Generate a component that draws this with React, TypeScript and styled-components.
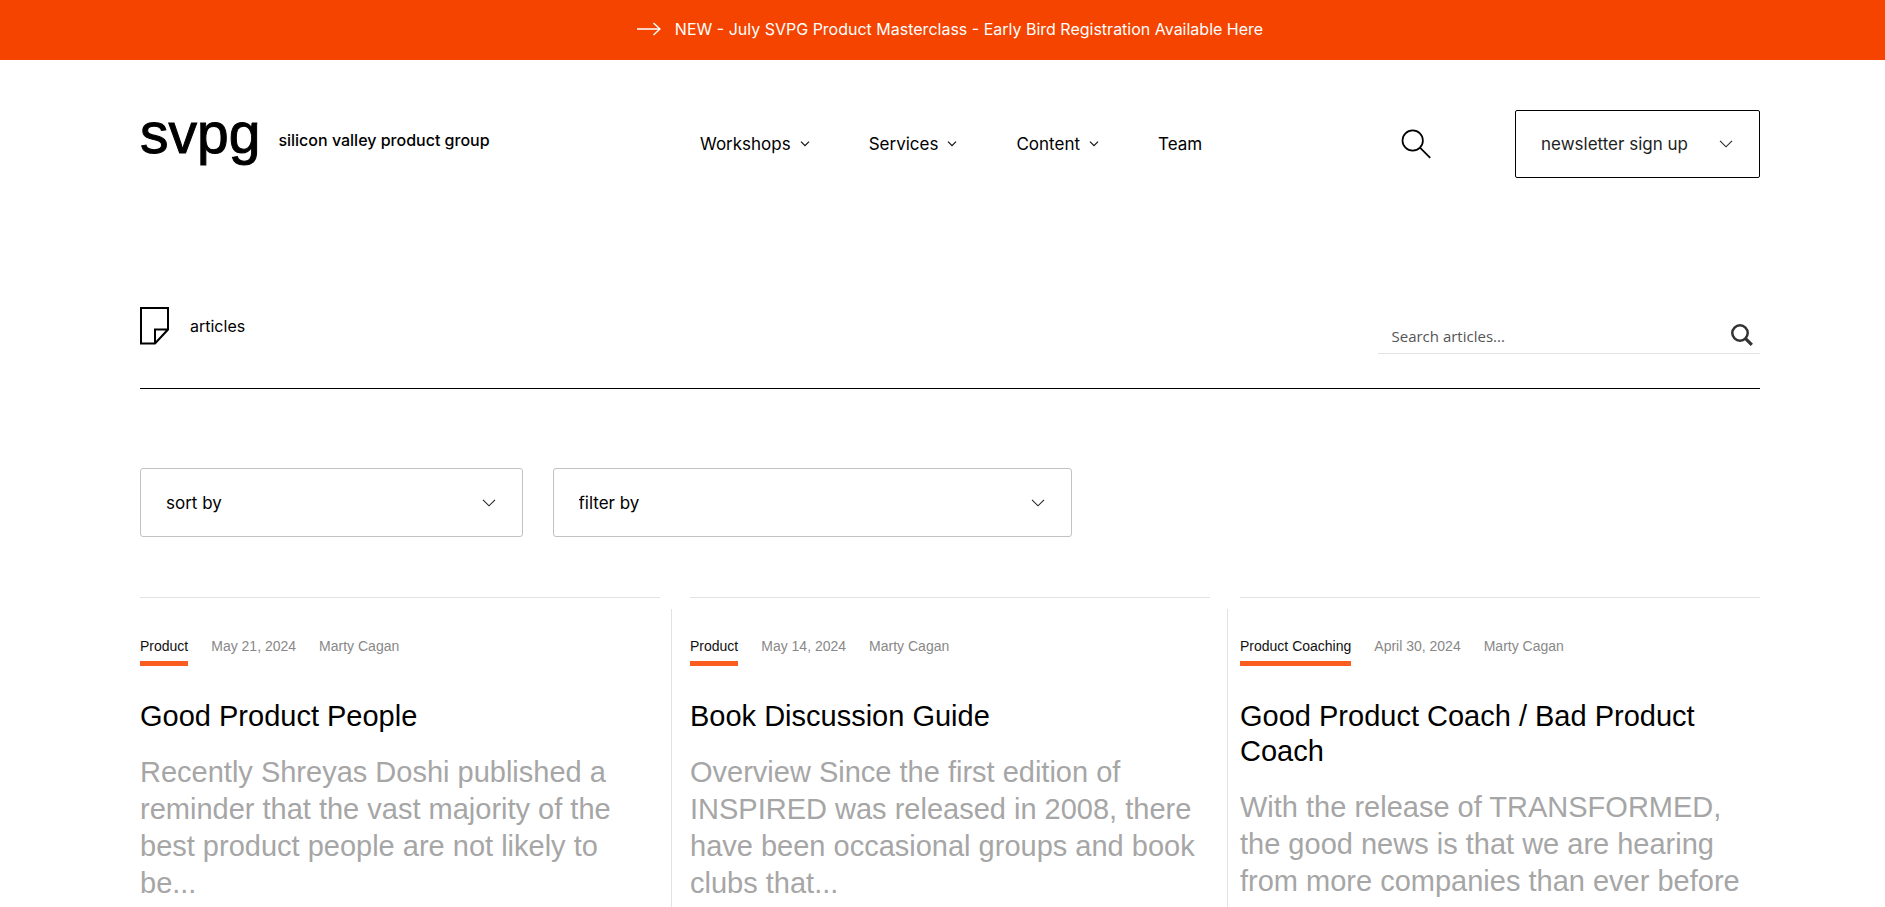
import React from 'react';
import styled, { createGlobalStyle } from 'styled-components';

const GlobalStyle = createGlobalStyle`
  *, *::before, *::after { box-sizing: border-box; }
  body {
    margin: 0;
    background: #fff;
    color: #000;
    font-family: Inter, "Liberation Sans", sans-serif;
  }
  a { color: inherit; text-decoration: none; }
  button, input, select { font: inherit; color: inherit; }
`;

const Page = styled.div`
  display: flex;
  flex-direction: column;
  min-height: 100vh;
`;

const Banner = styled.a`
  display: flex;
  align-items: center;
  justify-content: center;
  gap: 14px;
  min-height: 60px;
  padding: 0 125px 2px 140px;
  background: #f44400;
  color: #fff;
  font-size: 16px;
`;

const Header = styled.header`
  display: grid;
  grid-template-columns: 28fr 35fr 18fr;
  align-items: center;
  padding: 50px 125px 0 140px;
`;

const Logo = styled.a`
  display: flex;
  align-items: flex-end;
  align-self: start;
  gap: 18px;
  height: 48px;
  white-space: nowrap;
`;

const Wordmark = styled.span`
  font-family: "Liberation Sans", Arial, sans-serif;
  font-size: 57px;
  line-height: 46px;
  padding-bottom: 2px;
  -webkit-text-stroke: 1px #000;
`;

const Tagline = styled.span`
  padding-bottom: 8px;
  font-size: 16px;
  font-weight: 500;
  line-height: 20px;
`;

const Nav = styled.nav`
  display: flex;
  align-items: center;
  gap: 59px;
  font-size: 17px;
`;

const NavButton = styled.button`
  display: flex;
  align-items: center;
  gap: 9px;
  padding: 0;
  border: 0;
  background: none;
`;

const Actions = styled.div`
  display: flex;
  align-items: center;
  justify-content: space-between;
`;

const IconButton = styled.button`
  display: flex;
  padding: 0;
  border: 0;
  background: none;
`;

const NewsletterButton = styled.button`
  display: flex;
  align-items: center;
  justify-content: space-between;
  width: 245px;
  height: 68px;
  padding: 0 26px 0 25px;
  border: 1px solid #000;
  border-radius: 2px;
  background: #fff;
  color: #1e1e1e;
  font-size: 17px;
`;

const Main = styled.main`
  display: flex;
  flex-direction: column;
  flex: 1;
  padding: 129px 125px 0 140px;
`;

const TitleBar = styled.div`
  display: flex;
  justify-content: space-between;
  padding-bottom: 34px;
  border-bottom: 1px solid #000;
`;

const Title = styled.h1`
  display: flex;
  align-items: center;
  align-self: start;
  gap: 21px;
  margin: 0;
  font-size: 16px;
  font-weight: 400;
`;

const SearchForm = styled.form`
  display: flex;
  align-items: center;
  width: calc((100% - 90px) / 4);
  height: 47px;
  padding: 10px 7px 0 14px;
  border-bottom: 1px solid #e2e2e2;
`;

const SearchInput = styled.input`
  flex: 1;
  min-width: 0;
  padding: 2px 0 0;
  border: 0;
  outline: 0;
  background: none;
  font-family: "Open Sans", sans-serif;
  font-size: 15px;
  &::placeholder { color: #555; opacity: 1; }
`;

const Filters = styled.div`
  display: flex;
  gap: 30px;
  margin: 79px 0 60px;
`;

const SelectBox = styled.div<{ $columns: number }>`
  display: grid;
  align-items: center;
  width: ${({ $columns }) => `calc((100% - ${($columns - 1) * 30}px) / ${$columns})`};
  height: 69px;
  border: 1px solid #c2c2c2;
  border-radius: 3px;

  & > * { grid-area: 1 / 1; }
  & > svg { justify-self: end; margin-right: 26px; pointer-events: none; }
`;

const Select = styled.select`
  width: 100%;
  height: 100%;
  padding: 0 50px 0 25px;
  border: 0;
  background: none;
  appearance: none;
  font-size: 17px;
`;

const Articles = styled.section`
  display: grid;
  grid-template-columns: minmax(0, 1fr) 30px minmax(0, 1fr) 30px minmax(0, 1fr);
  flex: 1;
  font-family: "Liberation Sans", Arial, sans-serif;
`;

const Gutter = styled.div<{ $side: 'start' | 'end' }>`
  display: flex;
  justify-content: ${({ $side }) => $side};
  padding: 12px 12px 0 11px;

  &::before {
    content: "";
    width: 1px;
    background: #e2e2e2;
  }
`;

const Card = styled.article`
  padding-top: 38px;
  border-top: 1px solid #e2e2e2;
`;

const Meta = styled.div`
  display: flex;
  align-items: flex-start;
  gap: 23px;
  color: #888;
  font-size: 14px;
  line-height: 20px;
`;

const Category = styled.a`
  padding-bottom: 5px;
  border-bottom: 5px solid #fb5d20;
  color: #111;
`;

const Headline = styled.h2`
  margin: 33px 0 20px;
  font-size: 29px;
  font-weight: 400;
  line-height: 35px;
`;

const Excerpt = styled.p`
  margin: 0;
  color: #a6a6a6;
  font-size: 29px;
  line-height: 37px;
  white-space: pre-line;
`;

const SmallChevron = () => (
  <svg width="10" height="6" viewBox="0 0 10 6" fill="none" stroke="#111" strokeWidth="1.2" aria-hidden="true">
    <path d="M1 .7 5 4.7 9 .7" />
  </svg>
);

const Chevron = () => (
  <svg width="14" height="8" viewBox="0 0 14 8" fill="none" stroke="#222" strokeWidth="1.1" aria-hidden="true">
    <path d="M1 .8 7 6.8 13 .8" />
  </svg>
);

const ArrowIcon = () => (
  <svg width="24" height="14" viewBox="0 0 24 14" fill="none" stroke="#fff" strokeWidth="1.4" aria-hidden="true">
    <path d="M0 7H23M16.500 1 23 7 16.500 13" />
  </svg>
);

const SearchIcon = () => (
  <svg width="32" height="30" viewBox="0 0 32 30" fill="none" stroke="#000" strokeWidth="1.7" aria-hidden="true">
    <circle cx="12.700" cy="11.500" r="10.200" />
    <path d="M20 18.700 30.200 28.800" />
  </svg>
);

const BoldSearchIcon = () => (
  <svg width="22" height="22" viewBox="0 0 22 22" fill="none" stroke="#333" aria-hidden="true">
    <circle cx="9" cy="9" r="7.700" strokeWidth="2.500" />
    <path d="M14.300 14.300 20.800 20.800" strokeWidth="3.200" />
  </svg>
);

const PageIcon = () => (
  <svg width="29" height="38" viewBox="0 0 29 38" fill="none" stroke="#000" strokeWidth="2" aria-hidden="true">
    <path d="M1 1H28V22.500L15 36.500H1ZM15 36.500V22.500H28" />
  </svg>
);

type Article = { category: string; date: string; title: string; excerpt: string };

const articles: Article[] = [
  {
    category: 'Product',
    date: 'May 21, 2024',
    title: 'Good Product People',
    excerpt:
      'Recently Shreyas Doshi published a reminder that the vast majority of the best product people are not likely to\nbe...',
  },
  {
    category: 'Product',
    date: 'May 14, 2024',
    title: 'Book Discussion Guide',
    excerpt:
      'Overview Since the first edition of INSPIRED was released in 2008, there have been occasional groups and book clubs that...',
  },
  {
    category: 'Product Coaching',
    date: 'April 30, 2024',
    title: 'Good Product Coach / Bad Product Coach',
    excerpt: 'With the release of TRANSFORMED,\nthe good news is that we are hearing\nfrom more companies than ever before',
  },
];

export default function App() {
  return (
    <Page>
      <GlobalStyle />
      <Banner href="#masterclass">
        <ArrowIcon />
        <span>NEW - July SVPG Product Masterclass - Early Bird Registration Available Here</span>
      </Banner>

      <Header>
        <Logo href="#home">
          <Wordmark>svpg</Wordmark>
          <Tagline>silicon valley product group</Tagline>
        </Logo>
        <Nav>
          {['Workshops', 'Services', 'Content'].map((label) => (
            <NavButton key={label} type="button">
              {label}
              <SmallChevron />
            </NavButton>
          ))}
          <a href="#team">Team</a>
        </Nav>
        <Actions>
          <IconButton type="button" aria-label="Search">
            <SearchIcon />
          </IconButton>
          <NewsletterButton type="button">
            newsletter sign up
            <Chevron />
          </NewsletterButton>
        </Actions>
      </Header>

      <Main>
        <TitleBar>
          <Title>
            <PageIcon />
            articles
          </Title>
          <SearchForm role="search">
            <SearchInput type="text" aria-label="Search articles" placeholder="Search articles..." />
            <IconButton type="submit" aria-label="Submit search">
              <BoldSearchIcon />
            </IconButton>
          </SearchForm>
        </TitleBar>

        <Filters>
          <SelectBox $columns={4}>
            <Select aria-label="sort by">
              <option>sort by</option>
            </Select>
            <Chevron />
          </SelectBox>
          <SelectBox $columns={3}>
            <Select aria-label="filter by">
              <option>filter by</option>
            </Select>
            <Chevron />
          </SelectBox>
        </Filters>

        <Articles>
          {articles.map((article, index) => (
            <React.Fragment key={article.title}>
              {index > 0 && <Gutter $side={index === 1 ? 'start' : 'end'} />}
              <Card>
                <Meta>
                  <Category href="#category">{article.category}</Category>
                  <span>{article.date}</span>
                  <span>Marty Cagan</span>
                </Meta>
                <Headline>{article.title}</Headline>
                <Excerpt>{article.excerpt}</Excerpt>
              </Card>
            </React.Fragment>
          ))}
        </Articles>
      </Main>
    </Page>
  );
}
